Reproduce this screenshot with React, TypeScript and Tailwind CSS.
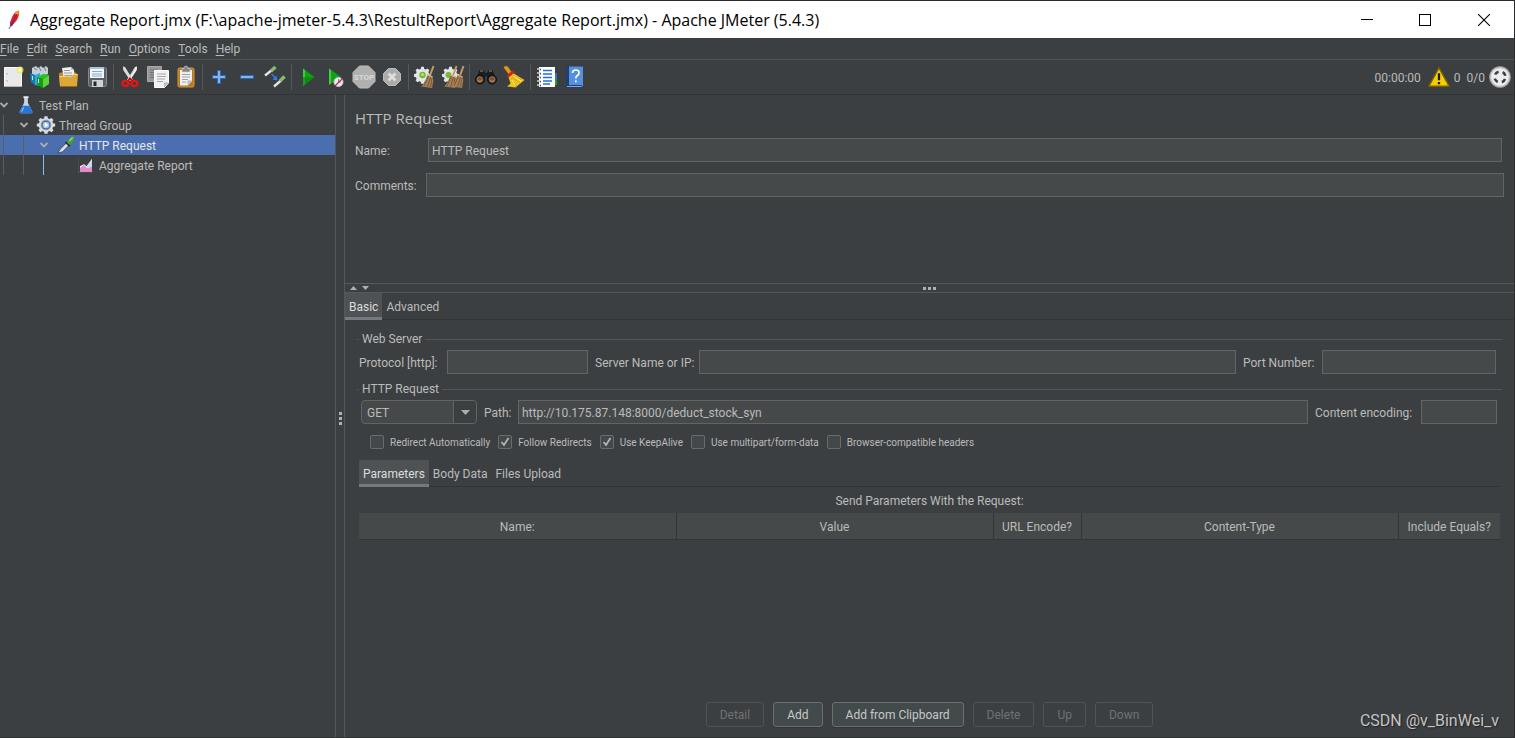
import { Fragment, type ReactNode } from "react";

type Tool = { label: string; icon: ReactNode; disabled?: boolean };

const titleText =
  "Aggregate Report.jmx (F:\\apache-jmeter-5.4.3\\RestultReport\\Aggregate Report.jmx) - Apache JMeter (5.4.3)";

const menus = ["File", "Edit", "Search", "Run", "Options", "Tools", "Help"];

const gear =
  "M8.4 1h3.2l.5 2.4 1.8.8 2.1-1.3 2.2 2.2-1.3 2.1.8 1.8 2.3.5v3l-2.3.6-.8 1.8 1.3 2-2.2 2.2-2.1-1.3-1.8.8-.5 2.4H8.4l-.5-2.4-1.8-.8L4 19.1l-2.2-2.2 1.3-2-.8-1.8L0 12.5v-3L2.3 9l.8-1.8-1.3-2.1L4 2.9l2.1 1.3 1.8-.8z";

function Icon({ children, size = 24 }: { children: ReactNode; size?: number }) {
  return (
    <svg width={size} height={size} viewBox="0 0 24 24" fill="none" aria-hidden="true">
      {children}
    </svg>
  );
}

function Broom({ x = 0 }: { x?: number }) {
  return (
    <g transform={`translate(${x} 0)`}>
      <path d="M20.5 1l-3.3 9" stroke="#c39a68" strokeWidth="2" />
      <path d="M14.5 9.5l5 1.8.8 4-1.2 7.7-11-1.4c3-2.5 4.5-6.5 6.4-12.1z" fill="#a57f55" />
      <path d="M15.5 11L11 21M17.5 12l-3 10M19 13l-1.5 9" stroke="#6f5135" strokeWidth=".8" />
      <path d="M14.5 10l5 2" stroke="#d8b98c" strokeWidth="1.2" />
    </g>
  );
}

const toolGroups: Tool[][] = [
  [
    {
      label: "New",
      icon: (
        <Icon>
          <path d="M3.5 2.5h17v19h-17z" fill="#e9e9e9" stroke="#fafafa" />
          <path d="M3 21.5h18" stroke="#b5b5b5" />
          <path d="M6 8v1.5M6 15v1.5" stroke="#9a9a9a" />
          <circle cx="19" cy="5" r="3.5" fill="#f5e75a" fillOpacity=".75" />
          <circle cx="19" cy="5" r="1.6" fill="#fffde0" />
        </Icon>
      ),
    },
    {
      label: "Templates",
      icon: (
        <Icon>
          <path d="M3 3l4-2 2 2 3-2 2 2 3-2 2 2v6l-8 3-8-3z" fill="#c4d0d4" />
          <path d="M5 3l3 2M10 2l2 4M15 2l2 4" stroke="#6d7d85" />
          <path d="M1 8l5 2v10l-4-3z" fill="#157ec2" />
          <path d="M6 10l5-2v13l-5-1z" fill="#2fa8e8" />
          <path d="M8 12l6 2v9l-6-3z" fill="#169b18" />
          <path d="M14 14l6-4v9l-6 4z" fill="#5ed43a" />
          <path d="M8 12l6-3 6 1-6 4z" fill="#2cc02c" />
          <path d="M3.5 11v4M9.5 14v4" stroke="#b9f0d0" />
        </Icon>
      ),
    },
    {
      label: "Open",
      icon: (
        <Icon>
          <path d="M2 9q0-1.5 1.5-1.5H18q2 0 2 2V20H3z" fill="#c08a20" />
          <path d="M5 3l9-1 3 3 1 9-11 1z" fill="#efefef" />
          <path d="M14 2v3h3z" fill="#bbb" />
          <path d="M7 5.5h6M7 8h8M7.5 10.5h8" stroke="#9b9b9b" />
          <path d="M2 11h13l2-2h4l-1 12.5H3z" fill="#dda63a" />
          <path d="M2.5 11.5H15l2-2h3.5" stroke="#f6cf74" />
          <path d="M3 21.5h17" stroke="#9b6b10" />
        </Icon>
      ),
    },
    {
      label: "Save",
      icon: (
        <Icon>
          <path d="M3.5 4.5q0-2 2-2h14q2 0 2 2v15q0 2-2 2h-14q-2 0-2-2z" fill="#5c6168" stroke="#858a90" />
          <path d="M5 2h14v11H5z" fill="#f3f6fa" />
          <path d="M5 2h14v2H5z" fill="#a9c4df" />
          <path d="M7 6.5h10M7 9h10M7 11h10" stroke="#86acd3" />
          <path d="M7 15h11v7H7z" fill="#cfd2d4" />
          <path d="M8.5 16.5h3V21h-3z" fill="#24282c" />
        </Icon>
      ),
    },
  ],
  [
    {
      label: "Cut",
      icon: (
        <Icon>
          <path d="M5 1.5l2 .5 8 13-2.5 1L5.2 5z" fill="#dcdcdc" />
          <path d="M19 1.5l-2 .5-8 13 2.500 1L18.800 5z" fill="#f4f4f4" />
          <path d="M17 3l-7 12" stroke="#9d9d9d" strokeWidth=".6" />
          <ellipse cx="7.500" cy="18.500" rx="3" ry="2.600" stroke="#e31616" strokeWidth="2.400" />
          <ellipse cx="16.500" cy="18.500" rx="3" ry="2.600" stroke="#e31616" strokeWidth="2.400" />
          <path d="M10 16l2-2.500 2.500 2.500" stroke="#c80d0d" strokeWidth="2" />
        </Icon>
      ),
    },
    {
      label: "Copy",
      icon: (
        <Icon>
          <path d="M1.500 1.500h14v15h-14z" fill="#989898" stroke="#a8a8a8" />
          <path d="M4 5h8M4 7.500h5M4 10h4M4 12.500h4" stroke="#717171" />
          <path d="M8.500 5.500h14V18l-4 4.500h-10z" fill="#f1f1f1" stroke="#fff" />
          <path d="M18 22.500v-5h5z" fill="#bcbcbc" />
          <path d="M11 9h9M11 11.500h9M11 14h8M11 16.500h6" stroke="#a6a6a6" />
        </Icon>
      ),
    },
    {
      label: "Paste",
      icon: (
        <Icon>
          <rect x="4" y="3" width="16" height="19" rx="1.500" fill="#b87a20" stroke="#d39a3e" />
          <path d="M6 5h12v11l-4 4.500H6z" fill="#f3f3f3" />
          <path d="M13.500 20.500v-5H18z" fill="#b8b8b8" />
          <path d="M8 9.500h8M8 12h8M8 14.500h6M8 17h4" stroke="#a0a0a0" />
          <path d="M8 3.500h2q0-2.500 2-2.500t2 2.500h2V7H8z" fill="#85888a" stroke="#c8c8c8" strokeWidth=".7" />
        </Icon>
      ),
    },
  ],
  [
    {
      label: "Expand All",
      icon: (
        <Icon>
          <path d="M10.500 5.500h3v5h5v3h-5v5h-3v-5h-5v-3h5z" fill="#84b4f0" stroke="#2d67b2" />
        </Icon>
      ),
    },
    {
      label: "Collapse All",
      icon: (
        <Icon>
          <path d="M5.500 10.500h13v3h-13z" fill="#84b4f0" stroke="#2d67b2" />
        </Icon>
      ),
    },
    {
      label: "Toggle",
      icon: (
        <Icon>
          <path d="M2 10.500L9 5" stroke="#e4e4e4" strokeWidth="2.400" />
          <path d="M8 6l4.500-4" stroke="#86bd6c" strokeWidth="3.400" />
          <path d="M11 21.500l7-6" stroke="#e4e4e4" strokeWidth="2.400" />
          <path d="M17 16l4.500-4.500" stroke="#86bd6c" strokeWidth="3.400" />
          <path d="M8.500 9l4 4" stroke="#2f7eea" strokeWidth="1.500" />
          <path d="M14.500 15.500l-5-1 4-4z" fill="#2f7eea" />
        </Icon>
      ),
    },
  ],
  [
    {
      label: "Start",
      icon: (
        <Icon>
          <path d="M7 3.500L18.500 12 7 21z" fill="#12a312" />
          <path d="M7 3.500l2 1.500v14L7 21z" fill="#46c846" />
          <path d="M7 21l11.500-9H7z" fill="#067f0a" fillOpacity=".6" />
        </Icon>
      ),
    },
    {
      label: "Start no pauses",
      icon: (
        <Icon>
          <path d="M5 3.500L17 12 5 20z" fill="#12a312" />
          <path d="M5 3.500L7 5v13.500L5 20z" fill="#46c846" />
          <circle cx="14.500" cy="17" r="4.500" fill="#e9eef8" stroke="#b9c6dc" />
          <path d="M14.500 14v3H17" stroke="#5a84c2" />
          <path d="M11 21l7.500-7.500" stroke="#e02020" strokeWidth="1.300" />
        </Icon>
      ),
    },
    {
      label: "Stop",
      disabled: true,
      icon: (
        <Icon>
          <path d="M7.500 1h9L23 7.500v9L16.500 23h-9L1 16.500v-9z" fill="#b0b0b0" stroke="#bebebe" />
          <text x="12" y="15" textAnchor="middle" fontSize="8" fontWeight="700" fontFamily="Roboto, sans-serif" fill="#d9d9d9">
            STOP
          </text>
        </Icon>
      ),
    },
    {
      label: "Shutdown",
      disabled: true,
      icon: (
        <Icon>
          <path d="M8.500 3.500h7l5 5v7l-5 5h-7l-5-5v-7z" fill="#ababab" stroke="#bcbcbc" />
          <path d="M8.500 8.500l7 7M15.500 8.500l-7 7" stroke="#e0e0e0" strokeWidth="2.600" />
        </Icon>
      ),
    },
  ],
  [
    {
      label: "Clear",
      icon: (
        <Icon>
          <g transform="translate(1 1) scale(.85)">
            <path d={gear} fill="#e4e4e4" />
          </g>
          <circle cx="9.500" cy="10" r="3.200" fill="#6fbe32" />
          <circle cx="9.500" cy="9.500" r="1.500" fill="#b2e37c" />
          <Broom />
        </Icon>
      ),
    },
    {
      label: "Clear All",
      icon: (
        <Icon>
          <g transform="translate(1 1) scale(.85)">
            <path d={gear} fill="#e4e4e4" />
          </g>
          <circle cx="7.500" cy="10" r="3" fill="#6fbe32" />
          <Broom x={-5} />
          <Broom x={2} />
        </Icon>
      ),
    },
  ],
  [
    {
      label: "Search",
      icon: (
        <Icon>
          <path d="M5.500 5h4l1.500 3h2l1.500-3h4l3.500 9h-8l-1.500-3h-1L10 14H2z" fill="#1c1c1c" />
          <path d="M6 6h3M15 6h3" stroke="#8d8d8d" />
          <circle cx="6" cy="14.500" r="4.500" fill="#242424" stroke="#0d0d0d" />
          <circle cx="18" cy="14.500" r="4.500" fill="#242424" stroke="#0d0d0d" />
          <circle cx="5.800" cy="14.500" r="2.800" fill="#8c4a1c" stroke="#8e8e8e" strokeWidth=".8" />
          <circle cx="18.200" cy="14.500" r="2.800" fill="#8c4a1c" stroke="#8e8e8e" strokeWidth=".8" />
          <path d="M4 15.500q2 2 3.500 0M16.500 15.500q2 2 3.500 0" stroke="#e38a3c" />
        </Icon>
      ),
    },
    {
      label: "Reset Search",
      icon: (
        <Icon>
          <path d="M2 3q-.5-2 2-2 2 0 2.500 1.500L9.500 7 6.500 9z" fill="#dc9b22" stroke="#9a6510" strokeWidth=".6" />
          <path d="M11 8L22.500 15 13.500 22.500 5 21.500 8.500 18.500 6.500 12z" fill="#edc520" />
          <path d="M11 10l9 5M10 12l8 6M9 13l6 8" stroke="#c49a18" strokeWidth=".7" />
          <path d="M12 11l7 5M10 15l3 5" stroke="#fff08a" strokeWidth=".9" />
          <path d="M5.500 11.500L12 6.500" stroke="#d81b1b" strokeWidth="2.600" />
        </Icon>
      ),
    },
  ],
  [
    {
      label: "Function Helper",
      icon: (
        <Icon>
          <path d="M18 8h4v6h-4z" fill="#1f77e0" />
          <path d="M18 14h4v6h-4z" fill="#1ea02b" />
          <path d="M4 2h16v20H4z" fill="#fff" />
          <path d="M8 5.500h9M8 9h9M8 12.500h9M8 16h9M8 19h7" stroke="#2370d8" strokeWidth="1.300" />
          <path d="M2 4h4M2 8h4M2 12h4M2 16h4M2 20h4" stroke="#d0d0d0" strokeWidth="1.600" />
          <path d="M5 4.800h1M5 8.800h1M5 12.800h1M5 16.800h1M5 20.800h1" stroke="#111" />
        </Icon>
      ),
    },
    {
      label: "Help",
      icon: (
        <Icon>
          <path d="M3 2.500L5 1h15v20.500L18 23H3z" fill="#1f3f73" />
          <path d="M6 1.500h14V20H6z" fill="#5590dc" />
          <path d="M4 21.500h14.500L20 20" stroke="#8ba9d6" />
          <path d="M9.500 8q0-3 3.300-3t3.300 2.800q0 1.700-1.700 2.700t-1.600 3" stroke="#fff" strokeWidth="1.600" />
          <path d="M12 15.500h1.700v1.700H12z" fill="#fff" />
        </Icon>
      ),
    },
  ],
];

const treeRows = [
  {
    text: "Test Plan",
    depth: 0,
    open: true,
    icon: (
      <Icon size={18}>
        <path d="M9.500 1h5v8l6 12q.5 2-2 2h-13q-2.500 0-2-2l6-12z" fill="#dce6ee" fillOpacity=".9" />
        <path d="M7.500 13h9l4 8q.5 2-2 2h-13q-2.500 0-2-2z" fill="#2377d8" />
        <path d="M8.500 1.500h7" stroke="#f4f4f4" strokeWidth="2" />
        <path d="M9 15l-3 6" stroke="#8fc0f5" strokeWidth="1.500" />
      </Icon>
    ),
  },
  {
    text: "Thread Group",
    depth: 1,
    open: true,
    icon: (
      <Icon size={20}>
        <g transform="translate(1 .5) scale(1.100 1.050)">
          <path d={gear} fill="#dcdcdc" />
        </g>
        <circle cx="12" cy="12" r="5.800" fill="#3c69a8" stroke="#8d99aa" />
        <circle cx="12" cy="12" r="4" fill="#a9c6ea" />
        <path d="M10.500 9l4.500 3-4.500 3z" fill="#fff" />
      </Icon>
    ),
  },
  {
    text: "HTTP Request",
    depth: 2,
    open: true,
    selected: true,
    icon: (
      <Icon size={20}>
        <path d="M2 22l3-5L13 9l3 3-8 8z" fill="#d9e2e0" stroke="#35424a" />
        <path d="M11.500 8.500l5 5" stroke="#222" strokeWidth="2" />
        <path d="M13 9q3-7 8.500-7.500Q23.500 6 16 12z" fill="#43a236" />
        <path d="M16 7l4-4" stroke="#a6dd8f" strokeWidth="1.500" />
      </Icon>
    ),
  },
  {
    text: "Aggregate Report",
    depth: 4,
    icon: (
      <Icon size={16}>
        <path d="M3 22V14l6-3 4 3 8-11v19z" fill="#fff" />
        <path d="M3 22v-6l6-4 5 5 7-3v8z" fill="#ea86cf" />
        <path d="M12 15L21 3v11l-6 3z" fill="#c3dcf3" />
        <path d="M0 1v21.500h22" stroke="#777" strokeDasharray="2 1" />
      </Icon>
    ),
  },
];

const checks = [
  { label: "Redirect Automatically", checked: false },
  { label: "Follow Redirects", checked: true },
  { label: "Use KeepAlive", checked: true },
  { label: "Use multipart/form-data", checked: false },
  { label: "Browser-compatible headers", checked: false },
];

const actions = [
  { label: "Detail", enabled: false },
  { label: "Add", enabled: true },
  { label: "Add from Clipboard", enabled: true },
  { label: "Delete", enabled: false },
  { label: "Up", enabled: false },
  { label: "Down", enabled: false },
];

const field = "h-6 min-w-0 border border-[#646464] bg-[#45494a] px-[3px] pt-0.5 text-[#bbbbbb] outline-none";

function TitleBar() {
  return (
    <header className="flex h-[37px] items-center bg-white text-black">
      <svg className="ml-2 mr-[10px]" width="12" height="20" viewBox="0 0 12 20" aria-hidden="true">
        <path d="M11 .5q.8 4-2 9.500L3.500 16.500 2 15Q3 6 7.500 2z" fill="#d6232f" />
        <path d="M11 .5Q8 1 6.500 3.500L10.500 5z" fill="#f39a2b" />
        <path d="M2.500 11L2 16l2-.5 2-3z" fill="#8a2a86" />
        <path d="M9 4L1 19" stroke="#6b2150" strokeWidth=".8" />
      </svg>
      <h1 className="font-[Open_Sans,sans-serif] text-base whitespace-nowrap">{titleText}</h1>
      <div className="ml-auto flex h-full">
        <button type="button" aria-label="Minimize" className="flex w-[58px] items-center justify-center">
          <span className="h-px w-3 bg-black" />
        </button>
        <button type="button" aria-label="Maximize" className="flex w-[58px] items-center justify-center">
          <span className="size-3 border border-black" />
        </button>
        <button type="button" aria-label="Close" className="flex w-[60px] items-center justify-center">
          <svg width="12" height="12" viewBox="0 0 12 12" stroke="#000" strokeWidth="1.100">
            <path d="M0 0l12 12M12 0L0 12" />
          </svg>
        </button>
      </div>
    </header>
  );
}

function Toolbar() {
  return (
    <div className="flex h-[35px] items-center border-b border-[#323537]">
      <div className="-ml-px flex items-center">
        {toolGroups.map((group, i) => (
          <Fragment key={i}>
            {i > 0 && <span className="mx-0.5 h-[26px] w-px bg-[#555758]" />}
            {group.map((tool) => (
              <button
                key={tool.label}
                type="button"
                aria-label={tool.label}
                disabled={tool.disabled}
                className="flex w-7 items-center justify-center"
              >
                {tool.icon}
              </button>
            ))}
          </Fragment>
        ))}
      </div>
      <div className="ml-auto flex items-center pr-[3px]">
        <span className="pt-0.5">00:00:00</span>
        <button type="button" className="ml-[7px] mr-[6px] flex items-center gap-1">
          <Icon size={22}>
            <path d="M12 2L23 22H1z" fill="#f6cd05" stroke="#7a6500" strokeWidth="1.500" strokeLinejoin="round" />
            <path d="M12 8v7.500M12 17.500v2.500" stroke="#1a1a1a" strokeWidth="2.500" />
          </Icon>
          <span className="pt-0.5">0</span>
        </button>
        <span className="pt-0.5">0/0</span>
        <span className="ml-1">
          <Icon size={22}>
            <circle cx="12" cy="12" r="11.500" fill="#c9c9c9" stroke="#8d8d8d" />
            <circle cx="12" cy="12" r="9.500" fill="#ededed" />
            <circle
              cx="12"
              cy="12"
              r="6"
              stroke="#3c3f41"
              strokeWidth="2.800"
              strokeDasharray="4.700 4.725"
              strokeDashoffset="-2.360"
            />
          </Icon>
        </span>
      </div>
    </div>
  );
}

function TestTree() {
  return (
    <nav className="w-[335px] shrink-0" aria-label="Test plan">
      {treeRows.map((row) => (
        <a
          key={row.text}
          href="#"
          className={`flex h-5 items-center ${row.selected ? "bg-[#4b6eaf] text-[#e3e6ea]" : ""}`}
        >
          {Array.from({ length: Math.min(row.depth, 3) }).map((_, i) => (
            <span key={i} className="h-full w-5 shrink-0 pl-[3px]">
              <span className={`block h-full w-px ${i === 2 ? "bg-[#7fc1f0]" : "bg-[#5a5d5f]"}`} />
            </span>
          ))}
          <span className="w-4 shrink-0">
            {row.open && (
              <svg width="8" height="8" viewBox="0 0 8 8" fill="none" stroke="#adadad" strokeWidth="1.800">
                <path d="M.5 2L4 5.500 7.500 2" />
              </svg>
            )}
          </span>
          <span className="mr-[3px] flex w-5 shrink-0 justify-center">{row.icon}</span>
          <span className="pt-0.5">{row.text}</span>
        </a>
      ))}
    </nav>
  );
}

function Tabs({ items }: { items: string[] }) {
  return (
    <div className="flex h-[27px] border-b border-[#323537] pr-1">
      {items.map((item, i) => (
        <button
          key={item}
          type="button"
          className={`h-[27px] px-1 ${i === 0 ? "border-b-[3px] border-[#747a80] bg-[#4e5254] pt-[3px] text-[#dddddd]" : ""}`}
        >
          {item}
        </button>
      ))}
    </div>
  );
}

function Combo() {
  return (
    <div className="grid h-6 w-[116px] shrink-0 rounded-sm border border-[#646464] bg-[#45494a]">
      <select
        aria-label="Method"
        defaultValue="GET"
        className="col-start-1 row-start-1 appearance-none bg-transparent pt-0.5 pl-[5px] text-[#bbbbbb] outline-none"
      >
        <option>GET</option>
        <option>POST</option>
      </select>
      <span className="pointer-events-none col-start-1 row-start-1 flex w-[23px] items-center justify-center justify-self-end rounded-r-sm border-l border-[#646464] bg-[#3c3f41]">
        <svg width="9" height="5" viewBox="0 0 9 5" fill="#adadad">
          <path d="M0 0h9L4.500 5z" />
        </svg>
      </span>
    </div>
  );
}

function RequestOptions() {
  return (
    <div className="mt-[9px] flex h-[18px] items-center gap-2 pl-[13px] text-[10px]">
      {checks.map((c) => (
        <label key={c.label} className="flex items-center gap-[6px] whitespace-nowrap">
          <span className="grid">
            <input
              type="checkbox"
              defaultChecked={c.checked}
              className="peer col-start-1 row-start-1 size-[14px] appearance-none rounded-[2px] border border-[#6b6b6b] bg-[#43494a]"
            />
            <svg
              className="pointer-events-none invisible col-start-1 row-start-1 peer-checked:visible"
              width="14"
              height="14"
              viewBox="0 0 14 14"
              fill="none"
              stroke="#b4b4b4"
              strokeWidth="1.800"
            >
              <path d="M3.500 7l2.500 3 4.500-7" />
            </svg>
          </span>
          <span className="pt-0.5">{c.label}</span>
        </label>
      ))}
    </div>
  );
}

function ParameterTable() {
  return (
    <table className="w-full table-fixed border-collapse">
      <caption className="h-[26px] pt-px leading-[26px]">Send Parameters With the Request:</caption>
      <colgroup>
        <col />
        <col />
        <col className="w-[88px]" />
        <col />
        <col className="w-[102px]" />
      </colgroup>
      <thead>
        <tr className="h-[26px] border-b border-[#323537] bg-[#45494a]">
          {["Name:", "Value", "URL Encode?", "Content-Type", "Include Equals?"].map((h) => (
            <th
              key={h}
              scope="col"
              className="border-r border-[#323537] p-0 pt-0.5 font-normal whitespace-nowrap last:border-r-0"
            >
              {h}
            </th>
          ))}
        </tr>
      </thead>
    </table>
  );
}

function Editor() {
  return (
    <main className="flex min-w-0 flex-1 flex-col border-l border-[#555758]">
      <section className="h-[188px] pl-[10px]">
        <h2 className="pt-[11px] font-[Open_Sans,sans-serif] text-[15px] leading-6">HTTP Request</h2>
        <div className="mt-2 mr-3 flex items-center">
          <label htmlFor="name" className="w-[73px] pt-0.5">
            Name:
          </label>
          <input id="name" defaultValue="HTTP Request" className={`${field} flex-1`} />
        </div>
        <div className="mt-[11px] mr-[10px] flex items-center">
          <label htmlFor="comments" className="w-[71px] pt-0.5">
            Comments:
          </label>
          <input id="comments" className={`${field} flex-1`} />
        </div>
      </section>

      <div className="grid h-[10px] grid-cols-3 items-center border-y border-[#555758]">
        <svg className="ml-[5px]" width="20" height="4" viewBox="0 0 20 4" fill="#b0b0b0">
          <path d="M0 4l3.500-4L7 4zM12 0h7l-3.500 4z" />
        </svg>
        <svg className="justify-self-center" width="13" height="3" viewBox="0 0 13 3" fill="#b0b0b0">
          <path d="M0 0h3v3H0zM5 0h3v3H5zM10 0h3v3h-3z" />
        </svg>
      </div>

      <Tabs items={["Basic", "Advanced"]} />

      <div className="flex flex-1 flex-col px-3 pt-[10px]">
        <fieldset className="border-t border-[#555555]">
          <legend className="ml-[2px] px-[3px] leading-[18px]">Web Server</legend>
          <div className="mt-[2px] mr-[6px] ml-[2px] flex items-center whitespace-nowrap">
            <label htmlFor="protocol" className="w-[88px] shrink-0 pt-0.5">
              Protocol [http]:
            </label>
            <input id="protocol" className={`${field} w-[141px]`} />
            <label htmlFor="server" className="ml-[7px] w-[104px] shrink-0 pt-0.5">
              Server Name or IP:
            </label>
            <input id="server" className={`${field} flex-1`} />
            <label htmlFor="port" className="ml-[7px] w-[79px] shrink-0 pt-0.5">
              Port Number:
            </label>
            <input id="port" className={`${field} w-[174px]`} />
          </div>
        </fieldset>

        <fieldset className="mt-[6px] border-t border-[#555555]">
          <legend className="ml-[2px] px-[3px] leading-[18px]">HTTP Request</legend>
          <div className="mt-[2px] mr-[5px] ml-1 flex items-center whitespace-nowrap">
            <Combo />
            <label htmlFor="path" className="ml-[7px] w-[34px] shrink-0 pt-0.5">
              Path:
            </label>
            <input id="path" defaultValue="http://10.175.87.148:8000/deduct_stock_syn" className={`${field} flex-1`} />
            <label htmlFor="encoding" className="ml-[7px] w-[106px] shrink-0 pt-0.5">
              Content encoding:
            </label>
            <input id="encoding" className={`${field} w-[76px]`} />
          </div>
          <RequestOptions />
        </fieldset>

        <div className="mt-[9px] mr-[2px] ml-[2px]">
          <Tabs items={["Parameters", "Body Data", "Files Upload"]} />
          <ParameterTable />
        </div>

        <div className="mt-auto mb-[10px] flex justify-center gap-[9px]">
          {actions.map((a) => (
            <button
              key={a.label}
              type="button"
              disabled={!a.enabled}
              className={`h-[25px] rounded-[3px] border px-[13px] ${
                a.enabled ? "border-[#6b6f70] bg-[#434a4b] text-[#c8c8c8] shadow-[0_1px_0_#333638]" : "border-[#505355] text-[#6f7274]"
              }`}
            >
              {a.label}
            </button>
          ))}
        </div>
      </div>
    </main>
  );
}

export default function App() {
  return (
    <div className="relative flex min-h-screen flex-col border-t border-r border-[#2a2a2c] bg-[#3c3f41] font-[Roboto,sans-serif] text-xs text-[#bbbbbb]">
      <TitleBar />
      <nav className="flex h-[22px] items-center gap-2 border-b border-[#515456]" aria-label="Menu">
        {menus.map((m) => (
          <button key={m} type="button">
            <span className="underline underline-offset-2">{m[0]}</span>
            {m.slice(1)}
          </button>
        ))}
      </nav>
      <Toolbar />
      <div className="flex flex-1 border-b border-[#2f3233]">
        <TestTree />
        <div className="flex w-[9px] items-center justify-center border-l border-[#555758] pt-1">
          <svg width="3" height="13" viewBox="0 0 3 13" fill="#b0b0b0">
            <path d="M0 0h3v3H0zM0 5h3v3H0zM0 10h3v3H0z" />
          </svg>
        </div>
        <Editor />
      </div>
      <p className="absolute right-[15px] bottom-[7px] text-base leading-5 text-[#c3c4c5] [text-shadow:1px_1px_1px_#222]">
        CSDN @v_BinWei_v
      </p>
    </div>
  );
}
